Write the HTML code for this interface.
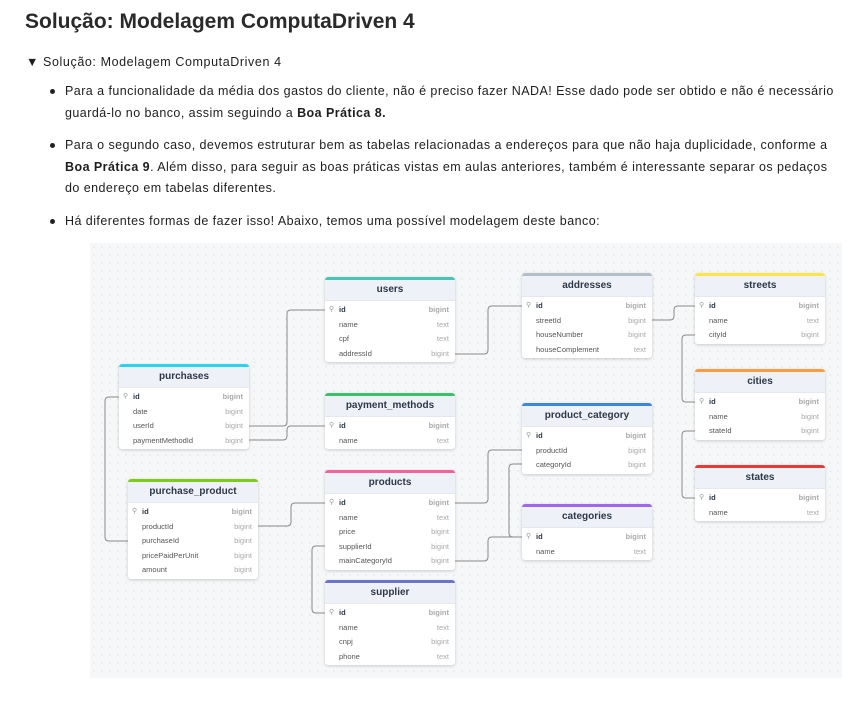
<!DOCTYPE html><html><head><meta charset="utf-8"><style>
body{margin:0;width:862px;height:707px;background:#fff;font-family:"Liberation Sans",sans-serif;color:#1e1e1e;position:relative;overflow:hidden}
h1{position:absolute;left:25px;top:10px;margin:0;font-size:21px;font-weight:bold;color:#2a2a2a;letter-spacing:0px}
.sum{position:absolute;left:26px;top:55px;font-size:12.5px;letter-spacing:0.6px}
.li{position:absolute;left:65px;width:790px;font-size:12.5px;line-height:21.7px;white-space:nowrap;letter-spacing:0.45px}
.li:before{content:"";position:absolute;left:-15px;top:8px;width:5px;height:5px;border-radius:50%;background:#222}
.dia{position:absolute;left:90px;top:243px;width:752px;height:435px;background-color:#f6f7f8;background-image:radial-gradient(#d3d6da 0.7px,transparent 0.8px);background-size:8px 8px}
.t{position:absolute;width:130px;background:#fff;border-radius:3px;box-shadow:0 1px 3px rgba(0,0,0,.18);font-size:7.5px;padding-bottom:1px}
.b{height:3px;border-radius:3px 3px 0 0}
.h{height:20px;line-height:20px;background:#eef2f8;text-align:center;font-weight:bold;font-size:10px;color:#2d3748;border-bottom:1px solid #e3e7ee;margin-bottom:2px}
.r{height:14.5px;line-height:14.5px;padding:0 6px 0 14px;color:#555;position:relative}
.r span{position:absolute;right:6px;color:#aaa}
.k{font-weight:bold;color:#2d3748}
.k:before{content:"⚲";position:absolute;left:4px;color:#999;font-weight:normal;font-size:7px}
svg{position:absolute;left:0;top:0}
</style></head><body>
<h1>Solução: Modelagem ComputaDriven 4</h1>
<div class="sum">▼ Solução: Modelagem ComputaDriven 4</div>
<div class="li" style="top:81px">Para a funcionalidade da média dos gastos do cliente, não é preciso fazer NADA! Esse dado pode ser obtido e não é necessário<br>guardá-lo no banco, assim seguindo a <b>Boa Prática 8.</b></div>
<div class="li" style="top:135px">Para o segundo caso, devemos estruturar bem as tabelas relacionadas a endereços para que não haja duplicidade, conforme a<br><b>Boa Prática 9</b>. Além disso, para seguir as boas práticas vistas em aulas anteriores, também é interessante separar os pedaços<br>do endereço em tabelas diferentes.</div>
<div class="li" style="top:211px">Há diferentes formas de fazer isso! Abaixo, temos uma possível modelagem deste banco:</div>
<div class="dia"></div>
<svg width="862" height="707" fill="none" stroke="#8a8a8a" stroke-width="1">
<path d="M249 426H283q4 0 4-4V314q0-4 4-4H325"/>
<path d="M249 440H283q4 0 4-4V430q0-4 4-4H325"/>
<path d="M119 397H109q-4 0-4 4V537q0 4 4 4H128"/>
<path d="M258 526H287q4 0 4-4V507q0-4 4-4H325"/>
<path d="M455 354H484q4 0 4-4V310q0-4 4-4H522"/>
<path d="M652 320H670q4 0 4-4V310q0-4 4-4H695"/>
<path d="M695 335H686q-4 0-4 4V398q0 4 4 4H695"/>
<path d="M695 431H686q-4 0-4 4V494q0 4 4 4H695"/>
<path d="M455 503H484q4 0 4-4V454q0-4 4-4H522"/>
<path d="M522 464H513q-4 0-4 4V533q0 4 4 4H522"/>
<path d="M455 561H484q4 0 4-4V541q0-4 4-4H522"/>
<path d="M325 546H316q-4 0-4 4V609q0 4 4 4H325"/>
</svg>
<div class="t" style="left:325px;top:277px"><div class="b" style="background:#4cc3b3"></div><div class="h">users</div><div class="r k">id<span>bigint</span></div><div class="r">name<span>text</span></div><div class="r">cpf<span>text</span></div><div class="r">addressId<span>bigint</span></div></div>
<div class="t" style="left:522px;top:273px"><div class="b" style="background:#b4bec8"></div><div class="h">addresses</div><div class="r k">id<span>bigint</span></div><div class="r">streetId<span>bigint</span></div><div class="r">houseNumber<span>bigint</span></div><div class="r">houseComplement<span>text</span></div></div>
<div class="t" style="left:695px;top:273px"><div class="b" style="background:#fbe64a"></div><div class="h">streets</div><div class="r k">id<span>bigint</span></div><div class="r">name<span>text</span></div><div class="r">cityId<span>bigint</span></div></div>
<div class="t" style="left:695px;top:369px"><div class="b" style="background:#f59c45"></div><div class="h">cities</div><div class="r k">id<span>bigint</span></div><div class="r">name<span>bigint</span></div><div class="r">stateId<span>bigint</span></div></div>
<div class="t" style="left:695px;top:465px"><div class="b" style="background:#e53a35"></div><div class="h">states</div><div class="r k">id<span>bigint</span></div><div class="r">name<span>text</span></div></div>
<div class="t" style="left:119px;top:364px"><div class="b" style="background:#2bd3ef"></div><div class="h">purchases</div><div class="r k">id<span>bigint</span></div><div class="r">date<span>bigint</span></div><div class="r">userId<span>bigint</span></div><div class="r">paymentMethodId<span>bigint</span></div></div>
<div class="t" style="left:325px;top:393px"><div class="b" style="background:#3cc06d"></div><div class="h">payment_methods</div><div class="r k">id<span>bigint</span></div><div class="r">name<span>text</span></div></div>
<div class="t" style="left:522px;top:403px"><div class="b" style="background:#3a88dc"></div><div class="h">product_category</div><div class="r k">id<span>bigint</span></div><div class="r">productId<span>bigint</span></div><div class="r">categoryId<span>bigint</span></div></div>
<div class="t" style="left:128px;top:479px"><div class="b" style="background:#7ccd19"></div><div class="h">purchase_product</div><div class="r k">id<span>bigint</span></div><div class="r">productId<span>bigint</span></div><div class="r">purchaseId<span>bigint</span></div><div class="r">pricePaidPerUnit<span>bigint</span></div><div class="r">amount<span>bigint</span></div></div>
<div class="t" style="left:325px;top:470px"><div class="b" style="background:#f2629b"></div><div class="h">products</div><div class="r k">id<span>bigint</span></div><div class="r">name<span>text</span></div><div class="r">price<span>bigint</span></div><div class="r">supplierId<span>bigint</span></div><div class="r">mainCategoryId<span>bigint</span></div></div>
<div class="t" style="left:522px;top:504px"><div class="b" style="background:#a066ee"></div><div class="h">categories</div><div class="r k">id<span>bigint</span></div><div class="r">name<span>text</span></div></div>
<div class="t" style="left:325px;top:580px"><div class="b" style="background:#6b74cb"></div><div class="h">supplier</div><div class="r k">id<span>bigint</span></div><div class="r">name<span>text</span></div><div class="r">cnpj<span>bigint</span></div><div class="r">phone<span>text</span></div></div>
</body></html>
